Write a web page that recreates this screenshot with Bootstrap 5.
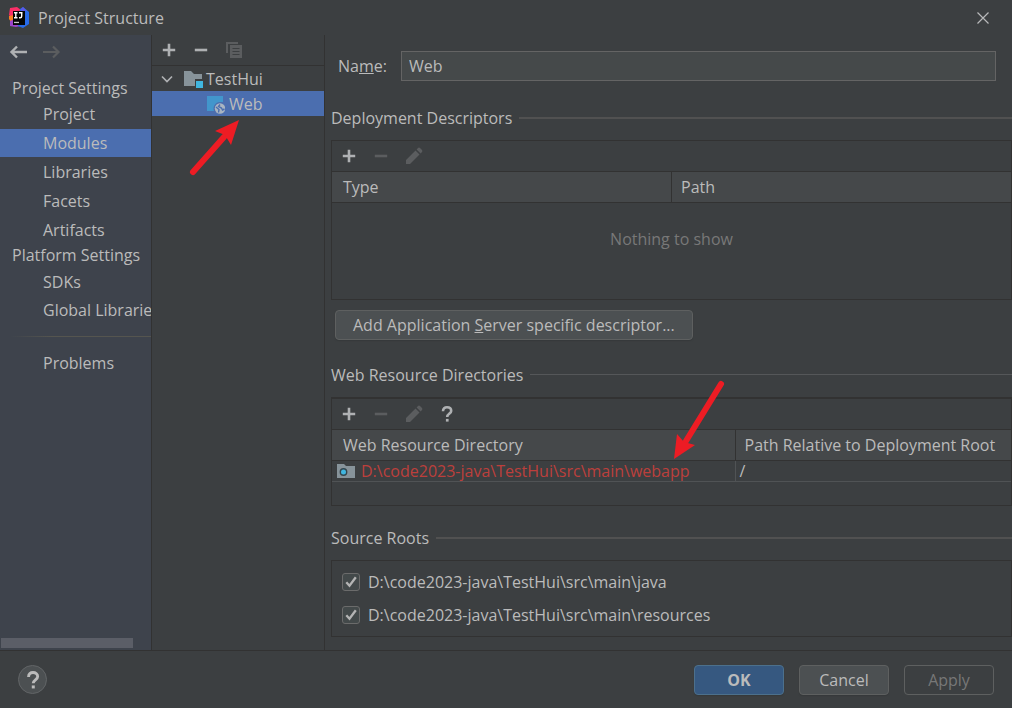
<!DOCTYPE html>
<html lang="en">
<head>
<meta charset="utf-8">
<meta name="viewport" content="width=device-width, initial-scale=1">
<title>Project Structure</title>
<link href="https://cdn.jsdelivr.net/npm/bootstrap@5.3.0/dist/css/bootstrap.min.css" rel="stylesheet">
<script src="https://cdn.jsdelivr.net/npm/bootstrap@5.3.0/dist/js/bootstrap.bundle.min.js"></script>
<style>
  :root { --ink: #bbbbbb; --face: #3c3f41; --edge: #323232; --pick: #4b6eaf; --dim: #5b5d5f; }
  body { background: var(--face); color: var(--ink); font: 16px/20px "Open Sans", "Noto Sans", sans-serif; }
  svg { display: block; flex: none; }
  .titlebar { height: 35px; padding: 0 19px 0 8px; }
  .tool { border: 0; background: none; padding: 0; color: #afb1b3; display: block; }
  .tool:disabled { color: var(--dim); }
  .sidebar { width: 152px; background: #3e434c; border-right: 1px solid var(--edge); overflow: hidden; }
  .history { height: 34px; padding-left: 9px; gap: 14px; }
  .group-title { line-height: 22px; padding-left: 12px; margin: 0; font-size: 16px; font-weight: 400; white-space: nowrap; }
  .side-link { display: block; line-height: 28px; margin-top: 1px; padding-left: 43px; color: var(--ink); text-decoration: none; white-space: nowrap; }
  .snug { padding-top: 2px; }
  .snug .side-link { margin-top: 0; }
  .side-link.active, .tree-item.active { background: var(--pick); }
  .side-rule { height: 1px; margin: 12px 0 12px 10px; background: linear-gradient(90deg, transparent, #55554f 30%); }
  .scroll-thumb { height: 10px; margin: 0 18px 2px 1px; background: #5b5e67; }
  .tree-pane { width: 173px; border-right: 1px solid var(--edge); }
  .tree-tools { height: 31px; padding-left: 9px; gap: 16px; border-bottom: 1px solid var(--edge); }
  .tree-item { height: 25px; color: var(--ink); text-decoration: none; }
  .editor { min-width: 0; padding-left: 6px; }
  .name-row { padding: 16px 16px 0 7px; gap: 14px; }
  .name-field { height: 30px; background: #45494a; border: 1px solid #646464; border-radius: 0; color: var(--ink); padding: 0 7px; font-size: 16px; }
  .name-field:focus { background: #45494a; color: var(--ink); border-color: #466d94; box-shadow: none; }
  .sect { gap: 7px; margin: 24px 0 11px; }
  .name-row + .sect { margin-top: 26px; }
  .frame + .sect { margin-top: 21px; }
  .sect h2 { font-size: 16px; line-height: 22px; font-weight: 400; margin: 0; }
  .sect::after { content: ""; flex: 1; height: 1px; background: #555759; }
  .sect.strong::after { height: 2px; background: #515151; }
  .frame { border: 1px solid var(--edge); }
  .frame.dirs { border-top-width: 2px; padding-bottom: 23px; }
  .bar { height: 30px; padding-left: 9px; gap: 16px; }
  .grid-table { width: 100%; table-layout: fixed; }
  .grid-table th { height: 31px; padding: 0 11px; font-weight: 400; background: #45484a; border: 1px solid var(--edge); border-width: 1px 0; }
  .grid-table th + th { border-left: 1px solid var(--edge); padding-left: 9px; }
  .col-half { width: 50%; }
  .col-wide { width: 403px; }
  .empty-cell { height: 96px; padding-bottom: 24px; text-align: center; color: #787878; }
  .res-row td { height: 21px; padding: 0 5px; border-bottom: 1px solid #505355; }
  .res-row td + td { border-left: 1px solid #505355; padding-left: 4px; }
  .missing { color: #bc3f3c; margin-left: 6px; white-space: nowrap; }
  .push { height: 30px; border: 1px solid #5e6060; border-radius: 4px; background: #4c5052; color: var(--ink); padding: 0 17px; font-size: 16px; line-height: 28px; box-shadow: 0 1px 1px #36393b; }
  .push:disabled { background: none; color: #777777; box-shadow: none; border-color: #5e6060; opacity: 1; }
  .push.primary { background: #365880; border-color: #4c708c; font-weight: 700; }
  .push.action { width: 90px; padding: 0; }
  .push.extra { margin-top: 10px; }
  .roots { padding: 7px 10px; gap: 5px; }
  .roots .form-check { min-height: 28px; padding: 0; margin: 0; gap: 8px; }
  .roots .form-check-input { width: 18px; height: 18px; float: none; margin: 0; border: 1px solid #6b6b6b; border-radius: 3px; background-color: #43494a; }
  .roots .form-check-input:checked { border-color: #6b6b6b; background-color: #43494a; background-size: 16px;
    background-image: url("data:image/svg+xml,%3Csvg xmlns='http://www.w3.org/2000/svg' viewBox='0 0 16 16'%3E%3Cpath fill='none' stroke='%23b4b4b4' stroke-width='2.3' d='M3.3 8.2l3.2 3.5L12.8 3.2'/%3E%3C/svg%3E"); }
  .footer { height: 58px; border-top: 1px solid var(--edge); padding: 0 18px; }
  .actions { gap: 15px; }
  .help { width: 29px; height: 29px; border: 1px solid #626567; border-radius: 50%; background: #4c5052; color: #bbbbbb; padding: 0; }
  .pointer { position: absolute; pointer-events: none; z-index: 2; }
  .pointer-tree { left: 36px; top: 84px; }
  .pointer-dir { left: 341px; top: -21px; }
</style>
</head>
<body>
<svg class="d-none" aria-hidden="true">
  <symbol id="plus" viewBox="0 0 16 16"><path d="M8 1.800v12.400M1.800 8h12.400" stroke="currentColor" stroke-width="2.600"/></symbol>
  <symbol id="minus" viewBox="0 0 16 16"><path d="M1.800 8h12.400" stroke="currentColor" stroke-width="2.600"/></symbol>
  <symbol id="pencil" viewBox="0 0 18 18"><path fill="currentColor" d="M1 17v-4L10.500 3.500l4 4L5 17zM11.600 2.400 13 1q1-.8 2 0l2 2q.8 1 0 2l-1.400 1.400z"/></symbol>
  <symbol id="query" viewBox="0 0 16 18"><path d="M4 6.200C4 3.500 5.700 2.300 8 2.300s4.200 1.300 4.200 3.600c0 2.800-4 3.100-4 6" fill="none" stroke="currentColor" stroke-width="2.600"/><path d="M6.900 13.900h2.700v2.700H6.900z" fill="currentColor"/></symbol>
</svg>

<div class="d-flex flex-column min-vh-100">
  <header class="titlebar d-flex align-items-center">
    <svg width="22" height="22" viewBox="0 0 22 22" aria-hidden="true">
      <path d="M2 1l7-1 4 3 1 4-8 6-5-5z" fill="#fb2f68"/><path d="M1 9l5-1v9l-3-2-2-3z" fill="#f98022"/><path d="M2 14l5-2 6 7-5 1-6-1z" fill="#9b45c9"/><path d="M12 2l3-2 6 5v12l-6 4-5-2z" fill="#286bea"/><path d="M13 2l2-2 4 4h-6z" fill="#5b58e6"/>
      <path d="M5 4h12v14H5z" fill="#050505"/><path d="M6 5.700h3.500M7.800 5.700v5M6 10.700h3.500M11 5.700h3.500M13.700 5.700v3.500q0 1.500-1.500 1.500H11" stroke="#fff" stroke-width="1.400" fill="none"/><path d="M6 14.800h5v1.300H6z" fill="#c8c8c8"/>
    </svg>
    <span class="ms-2 flex-grow-1">Project Structure</span>
    <button class="tool" aria-label="Close"><svg width="20" height="20" viewBox="0 0 20 20"><path d="M4.500 4.500l11 11M15.500 4.500l-11 11" stroke="#b8b9ba" stroke-width="1.200"/></svg></button>
  </header>

  <main class="d-flex flex-grow-1">
    <nav class="sidebar d-flex flex-column flex-shrink-0" aria-label="Settings">
      <div class="history d-flex align-items-center">
        <button class="tool" aria-label="Back"><svg width="19" height="16" viewBox="0 0 19 16"><path d="M18 8H3M8 2.500L2.500 8 8 13.500" stroke="currentColor" stroke-width="2.400" fill="none"/></svg></button>
        <button class="tool" aria-label="Forward" disabled><svg width="19" height="16" viewBox="0 0 19 16"><path d="M1 8h15M11 2.500L16.500 8 11 13.500" stroke="currentColor" stroke-width="2.200" fill="none"/></svg></button>
      </div>
      <h2 class="group-title mt-2">Project Settings</h2>
      <a class="side-link" href="#">Project</a>
      <a class="side-link active" href="#" aria-current="page">Modules</a>
      <a class="side-link" href="#">Libraries</a>
      <a class="side-link" href="#">Facets</a>
      <a class="side-link" href="#">Artifacts</a>
      <h2 class="group-title">Platform Settings</h2>
      <div class="snug">
        <a class="side-link" href="#">SDKs</a>
        <a class="side-link" href="#">Global Libraries</a>
        <div class="side-rule"></div>
        <a class="side-link" href="#">Problems</a>
      </div>
      <div class="scroll-thumb mt-auto"></div>
    </nav>

    <section class="tree-pane flex-shrink-0 position-relative" aria-label="Modules">
      <div class="tree-tools d-flex align-items-center">
        <button class="tool" aria-label="Add"><svg width="16" height="16"><use href="#plus"/></svg></button>
        <button class="tool" aria-label="Remove"><svg width="16" height="16"><use href="#minus"/></svg></button>
        <button class="tool" aria-label="Copy" disabled><svg width="18" height="18" viewBox="0 0 18 18"><path d="M1 12V1h12v2H3v9z" fill="currentColor"/><path d="M5 4h12v13H5z" fill="currentColor"/><path d="M7.500 7.500h7M7.500 10.500h7M7.500 13.500h7" stroke="#3c3f41"/></svg></button>
      </div>
      <a class="tree-item d-flex align-items-center ps-2" href="#">
        <svg width="14" height="14" viewBox="0 0 14 14"><path d="M2 4.500l5 5 5-5" stroke="#afb1b3" stroke-width="1.700" fill="none"/></svg>
        <svg class="ms-2" width="24" height="20" viewBox="0 0 24 20"><path d="M2 17V2h7l3 3h8v5h-7v7z" fill="#87939a"/><path d="M14 12h7v7h-7z" fill="#40b6e0"/></svg>
        <span>TestHui</span>
      </a>
      <a class="tree-item active d-flex align-items-center" href="#">
        <svg class="ms-5 me-1" width="25" height="20" viewBox="0 0 25 20"><path d="M7 2h16v6h-3a6.500 6.500 0 0 0-6 9H7z" fill="#4296cc"/><circle cx="20" cy="14.500" r="5.200" fill="#a9b5c2"/><path d="M16 13l3 2.500-.5 3M20 10.500l-1.500 2 3 1.500 1 2 2-1" stroke="#4b6eaf" stroke-width="1.400" fill="none"/></svg>
        <span>Web</span>
      </a>
      <svg class="pointer pointer-tree" width="54" height="58" viewBox="0 0 54 58" aria-hidden="true"><path d="M5 53L36 18" stroke="#ed1c24" stroke-width="6" stroke-linecap="round"/><path d="M51 1L43 26 37 16 27 12z" fill="#ed1c24"/></svg>
    </section>

    <section class="editor flex-grow-1" aria-label="Web facet">
      <div class="name-row d-flex align-items-center">
        <label for="facet-name">Na<u>m</u>e:</label>
        <input id="facet-name" class="form-control name-field" value="Web">
      </div>

      <div class="sect strong d-flex align-items-center"><h2>Deployment Descriptors</h2></div>
      <div class="frame">
        <div class="bar d-flex align-items-center">
          <button class="tool" aria-label="Add descriptor"><svg width="16" height="16"><use href="#plus"/></svg></button>
          <button class="tool" aria-label="Remove descriptor" disabled><svg width="16" height="16"><use href="#minus"/></svg></button>
          <button class="tool" aria-label="Edit descriptor" disabled><svg width="18" height="18"><use href="#pencil"/></svg></button>
        </div>
        <table class="grid-table">
          <thead><tr><th class="col-half">Type</th><th>Path</th></tr></thead>
          <tbody><tr><td class="empty-cell" colspan="2">Nothing to show</td></tr></tbody>
        </table>
      </div>
      <button class="push extra ms-1">Add Application <u>S</u>erver specific descriptor...</button>

      <div class="sect d-flex align-items-center"><h2>Web Resource Directories</h2></div>
      <div class="frame dirs position-relative">
        <div class="bar d-flex align-items-center">
          <button class="tool" aria-label="Add directory"><svg width="16" height="16"><use href="#plus"/></svg></button>
          <button class="tool" aria-label="Remove directory" disabled><svg width="16" height="16"><use href="#minus"/></svg></button>
          <button class="tool" aria-label="Edit directory" disabled><svg width="18" height="18"><use href="#pencil"/></svg></button>
          <button class="tool" aria-label="Directory help"><svg width="16" height="18"><use href="#query"/></svg></button>
        </div>
        <table class="grid-table">
          <thead><tr><th class="col-wide">Web Resource Directory</th><th class="text-nowrap">Path Relative to Deployment Root</th></tr></thead>
          <tbody><tr class="res-row">
            <td><div class="d-flex align-items-center"><svg width="18" height="16" viewBox="0 0 18 16"><path d="M0 1h7l2 2h9v12H0z" fill="#87939a"/><circle cx="6.500" cy="9" r="3.200" fill="#40b6e0" stroke="#34464e" stroke-width="1.400"/></svg><span class="missing">D:\code2023-java\TestHui\src\main\webapp</span></div></td>
            <td>/</td>
          </tr></tbody>
        </table>
        <svg class="pointer pointer-dir" width="55" height="82" viewBox="0 0 55 82" aria-hidden="true"><path d="M48 6L13 63" stroke="#ed1c24" stroke-width="6" stroke-linecap="round"/><path d="M1 81L4 56 11 64 22 67z" fill="#ed1c24"/></svg>
      </div>

      <div class="sect strong d-flex align-items-center"><h2>Source Roots</h2></div>
      <div class="frame roots d-flex flex-column">
        <div class="form-check d-flex align-items-center"><input class="form-check-input" type="checkbox" id="root-java" checked><label for="root-java">D:\code2023-java\TestHui\src\main\java</label></div>
        <div class="form-check d-flex align-items-center"><input class="form-check-input" type="checkbox" id="root-res" checked><label for="root-res">D:\code2023-java\TestHui\src\main\resources</label></div>
      </div>
    </section>
  </main>

  <footer class="footer d-flex align-items-center">
    <button class="help d-flex align-items-center justify-content-center me-auto" aria-label="Help"><svg width="18" height="20"><use href="#query"/></svg></button>
    <div class="actions d-flex">
      <button class="push primary action">OK</button>
      <button class="push action">Cancel</button>
      <button class="push action" disabled>Apply</button>
    </div>
  </footer>
</div>
</body>
</html>
